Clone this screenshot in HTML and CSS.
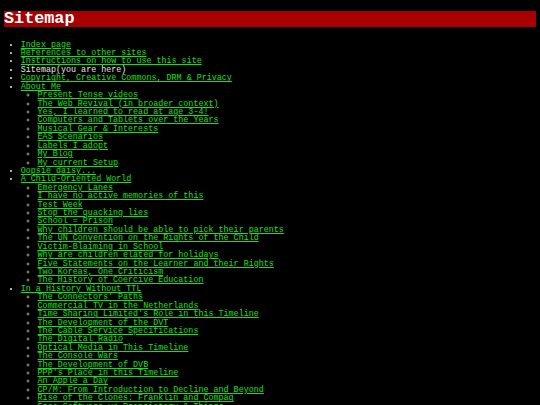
FILE: index.html
```html
<!DOCTYPE html>
<html>
<head>
<meta charset="utf-8">
<title>Sitemap</title>
<link rel="stylesheet" href="styles.css">
</head>
<body>
<h1 class="title">Sitemap</h1>
<ul class="map">
  <li><a href="#">Index page</a></li>
  <li><a href="#">References to other sites</a></li>
  <li><a href="#">Instructions on how to use this site</a></li>
  <li class="here">Sitemap(you are here)</li>
  <li><a href="#">Copyright, Creative Commons, DRM &amp; Privacy</a></li>
  <li><a href="#">About Me</a>
    <ul class="sub">
      <li><a href="#">Present Tense videos</a></li>
      <li><a href="#">The Web Revival (in broader context)</a></li>
      <li><a href="#">Yes, I learned to read at age 3-4!</a></li>
      <li><a href="#">Computers and Tablets over the Years</a></li>
      <li><a href="#">Musical Gear &amp; Interests</a></li>
      <li><a href="#">EAS Scenarios</a></li>
      <li><a href="#">Labels I adopt</a></li>
      <li><a href="#">My Blog</a></li>
      <li><a href="#">My current Setup</a></li>
    </ul>
  </li>
  <li><a href="#">Oopsie daisy...</a></li>
  <li><a href="#">A Child-Oriented World</a>
    <ul class="sub">
      <li><a href="#">Emergency Lanes</a></li>
      <li><a href="#">I have no active memories of this</a></li>
      <li><a href="#">Test Week</a></li>
      <li><a href="#">Stop the quacking lies</a></li>
      <li><a href="#">School = Prison</a></li>
      <li><a href="#">Why children should be able to pick their parents</a></li>
      <li><a href="#">The UN Convention on the Rights of the Child</a></li>
      <li><a href="#">Victim-Blaiming in School</a></li>
      <li><a href="#">Why are children elated for holidays</a></li>
      <li><a href="#">Five Statements on the Learner and their Rights</a></li>
      <li><a href="#">Two Koreas, One Criticism</a></li>
      <li><a href="#">The History of Coercive Education</a></li>
    </ul>
  </li>
  <li><a href="#">In a History Without TTL</a>
    <ul class="sub">
      <li><a href="#">The Connectors' Paths</a></li>
      <li><a href="#">Commercial TV in the Netherlands</a></li>
      <li><a href="#">Time Sharing Limited's Role in this Timeline</a></li>
      <li><a href="#">The Development of the DVT</a></li>
      <li><a href="#">The Cable Service Specifications</a></li>
      <li><a href="#">The Digital Radio</a></li>
      <li><a href="#">Optical Media in This Timeline</a></li>
      <li><a href="#">The Console Wars</a></li>
      <li><a href="#">The Development of DVB</a></li>
      <li><a href="#">PPP's Place in this Timeline</a></li>
      <li><a href="#">An Apple a Day</a></li>
      <li><a href="#">CP/M: From Introduction to Decline and Beyond</a></li>
      <li><a href="#">Rise of the Clones: Franklin and Compaq</a></li>
      <li><a href="#">Free Software vs Proprietary &amp; Things</a></li>
      <li><a href="#">The Home Computer Boom</a></li>
    </ul>
  </li>
</ul>
</body>
</html>
```
FILE: styles.css
```css
html {
  background: #000;
}
body {
  margin: 0;
  padding: 4px;
  background: #000;
  color: #e6e6e6;
  font-family: "Liberation Mono", "DejaVu Sans Mono", monospace;
  font-size: 8.4px;
  line-height: 8.42px;
}
.title {
  font-size: 16.8px;
  line-height: 16.3px;
  font-weight: bold;
  color: #fff;
  background: #a80000;
  margin: 7px 0 13.3px;
  padding: 0;
}
.map {
  margin: 0;
  padding-left: 16.8px;
  list-style: disc;
}
.map li::marker {
  color: #e6e6e6;
}
.sub {
  margin: 0;
  padding-left: 16.8px;
  list-style: circle;
}
.sub li::marker {
  color: #9a9a9a;
}
.map a {
  color: #18e018;
  text-decoration: underline;
}
.here {
  color: #e6e6e6;
}
```
